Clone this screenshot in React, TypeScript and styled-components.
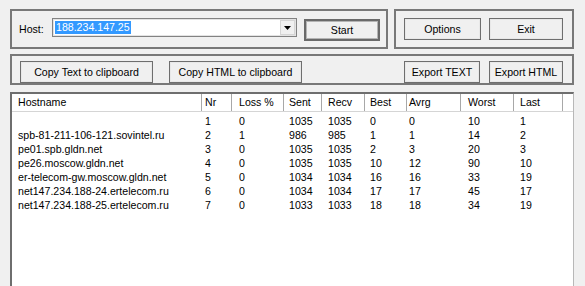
import React from "react";
import styled, { createGlobalStyle } from "styled-components";

const GlobalStyle = createGlobalStyle`
  html, body {
    margin: 0;
    padding: 0;
    background: #f0f0f0;
    overflow: hidden;
  }
  body {
    font-family: "Liberation Sans", Arial, sans-serif;
    font-size: 10.6px;
    color: #000;
  }
`;

const Window = styled.div`
  width: 585px;
  height: 286px;
  box-sizing: border-box;
  padding: 9px 11px 0 10px;
  display: flex;
  flex-direction: column;
  gap: 5px;
  overflow: hidden;
`;

const TopRow = styled.div`
  display: flex;
  gap: 6px;
`;

const Group = styled.div<{ $width?: number; $height: number }>`
  box-sizing: border-box;
  width: ${(p) => (p.$width ? `${p.$width}px` : "auto")};
  flex: ${(p) => (p.$width ? "none" : "1")};
  height: ${(p) => p.$height}px;
  border: 2px solid #787878;
  display: flex;
  align-items: flex-start;
`;

const HostGroup = styled(Group)`
  padding: 7px 0 0 7px;
`;

const ActionGroup = styled(Group)`
  padding: 7px 9px 0 8px;
  gap: 8px;
`;

const ClipGroup = styled(Group)`
  padding: 5px 9px 0 8px;
  gap: 16px;
`;

const Label = styled.span`
  margin-top: 5px;
  width: 33px;
  line-height: 12px;
`;

const Combo = styled.div`
  box-sizing: border-box;
  width: 245px;
  height: 19px;
  border: 1px solid #828282;
  box-shadow: inset 0 0 0 1px #e3e3e3;
  background: #fff;
  display: flex;
  align-items: center;
  padding: 0 1px 0 2px;
`;

const Selected = styled.span`
  background: #3399ff;
  color: #fff;
  line-height: 13px;
  padding: 0 1px;
`;

const DropButton = styled.div`
  margin-left: auto;
  box-sizing: border-box;
  width: 15px;
  height: 15px;
  border: 1px solid #d5d5d5;
  background: #f0f0f0;
  display: flex;
  align-items: center;
  justify-content: center;
`;

const Button = styled.div<{ $width: number; $default?: boolean }>`
  box-sizing: border-box;
  width: ${(p) => p.$width}px;
  height: 22px;
  border: ${(p) => (p.$default ? "2px solid #6a6a6a" : "1px solid #6e6e6e")};
  box-shadow: inset 0 0 0 1px ${(p) => (p.$default ? "#b4b4b4" : "#e8e8e8")};
  background: #f0f0f0;
  display: flex;
  align-items: center;
  justify-content: center;
  white-space: nowrap;
`;

const PushRight = styled.div`
  margin-left: auto;
  display: flex;
  gap: 9px;
`;

const List = styled.div`
  box-sizing: border-box;
  width: 564px;
  height: 200px;
  margin-top: 2px;
  border-top: 2px solid #6e6e6e;
  border-left: 2px solid #6e6e6e;
  border-right: 1px solid #b8b8b8;
  background: #fff;
`;

const HeaderRow = styled.div`
  display: flex;
  height: 17px;
  border-bottom: 1px solid #d5d5d5;
`;

const HeadCell = styled.div<{ $w: number; $pad: number }>`
  box-sizing: border-box;
  width: ${(p) => p.$w}px;
  padding-left: ${(p) => p.$pad}px;
  line-height: 16px;
  border-right: 1px solid #a8a8a8;
  white-space: nowrap;
  overflow: hidden;
`;

const Body = styled.div`
  padding-top: 2px;
`;

const Row = styled.div`
  display: flex;
  height: 14px;
  line-height: 14px;
`;

const Cell = styled.div<{ $w: number; $pad: number }>`
  box-sizing: border-box;
  width: ${(p) => p.$w}px;
  padding-left: ${(p) => p.$pad}px;
  white-space: nowrap;
  overflow: hidden;
`;

const columns = [
  { name: "Hostname", w: 190, pad: 6 },
  { name: "Nr", w: 30, pad: 3 },
  { name: "Loss %", w: 52, pad: 7 },
  { name: "Sent", w: 38, pad: 5 },
  { name: "Recv", w: 43, pad: 6 },
  { name: "Best", w: 42, pad: 5 },
  { name: "Avrg", w: 54, pad: 2 },
  { name: "Worst", w: 53, pad: 7 },
  { name: "Last", w: 49, pad: 6 },
];

const rows = [
  ["", "1", "0", "1035", "1035", "0", "0", "10", "1"],
  ["spb-81-211-106-121.sovintel.ru", "2", "1", "986", "985", "1", "1", "14", "2"],
  ["pe01.spb.gldn.net", "3", "0", "1035", "1035", "2", "3", "20", "3"],
  ["pe26.moscow.gldn.net", "4", "0", "1035", "1035", "10", "12", "90", "10"],
  ["er-telecom-gw.moscow.gldn.net", "5", "0", "1034", "1034", "16", "16", "33", "19"],
  ["net147.234.188-24.ertelecom.ru", "6", "0", "1034", "1034", "17", "17", "45", "17"],
  ["net147.234.188-25.ertelecom.ru", "7", "0", "1033", "1033", "18", "18", "34", "19"],
];

export default function App() {
  return (
    <>
      <GlobalStyle />
      <Window>
        <TopRow>
          <HostGroup $width={378} $height={40}>
            <Label>Host:</Label>
            <Combo>
              <Selected>188.234.147.25</Selected>
              <DropButton>
                <svg width="7" height="4" viewBox="0 0 7 4">
                  <path d="M0 0h7L3.5 4z" fill="#000" />
                </svg>
              </DropButton>
            </Combo>
            <Button $width={76} $default style={{ marginLeft: 7, marginTop: 1 }}>
              Start
            </Button>
          </HostGroup>
          <ActionGroup $height={40}>
            <Button $width={77}>Options</Button>
            <Button $width={74}>Exit</Button>
          </ActionGroup>
        </TopRow>
        <ClipGroup $height={35}>
          <Button $width={133}>Copy Text to clipboard</Button>
          <Button $width={133}>Copy HTML to clipboard</Button>
          <PushRight>
            <Button $width={76}>Export TEXT</Button>
            <Button $width={74}>Export HTML</Button>
          </PushRight>
        </ClipGroup>
        <List>
          <HeaderRow>
            {columns.map((c) => (
              <HeadCell key={c.name} $w={c.w} $pad={c.pad}>
                {c.name}
              </HeadCell>
            ))}
          </HeaderRow>
          <Body>
            {rows.map((r, i) => (
              <Row key={i}>
                {r.map((v, j) => (
                  <Cell key={j} $w={columns[j].w} $pad={columns[j].pad}>
                    {v}
                  </Cell>
                ))}
              </Row>
            ))}
          </Body>
        </List>
      </Window>
    </>
  );
}
